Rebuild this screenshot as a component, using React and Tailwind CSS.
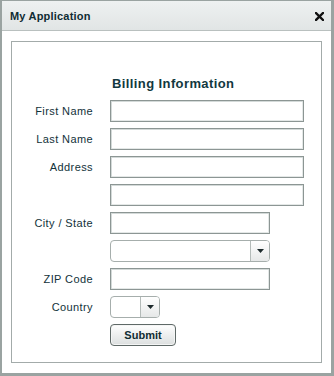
import React from "react";

function Field({ w }) {
  return (
    <div
      className={`h-[22px] border border-[#8c9694] bg-white shadow-[inset_1px_1px_0_#d4dad9,inset_-1px_-1px_0_#e4e8e7] ${w}`}
    />
  );
}

function Select({ w }) {
  return (
    <div className={`h-[22px] ${w} flex rounded-[4px] border border-[#a6aeac] bg-white overflow-hidden`}>
      <div className="flex-1" />
      <div className="w-[19px] border-l border-[#b4bbb9] bg-gradient-to-b from-[#ffffff] to-[#e6e8e8] flex items-center justify-center">
        <svg width="7" height="4" viewBox="0 0 7 4">
          <path d="M0 0H7L3.5 4Z" fill="#1d2a2c" />
        </svg>
      </div>
    </div>
  );
}

function Row({ label, children }) {
  return (
    <div className="flex items-center h-[22px]">
      <div className="w-[81px] text-right text-[11px] tracking-[0.4px] text-[#12323a]">{label}</div>
      <div className="ml-[17px]">{children}</div>
    </div>
  );
}

export default function App() {
  return (
    <div
      className="w-[334px] h-[376px] bg-white border-l-2 border-t border-r-[3px] border-b-[3px] border-[#9aa3a1] flex flex-col"
      style={{ fontFamily: '"Liberation Sans", Arial, sans-serif' }}
    >
      <div className="h-[30px] shrink-0 bg-gradient-to-b from-[#eef1f1] to-[#e1e5e5] border-b border-[#b9c0bf] flex items-center justify-between pl-[8px] pr-[7px] pt-[1px]">
        <span className="text-[11px] font-bold text-[#0f2c33] tracking-[0.2px]">My Application</span>
        <svg width="9" height="9" viewBox="0 0 9 9">
          <path d="M1 1L8 8M8 1L1 8" stroke="#111" strokeWidth="2.4" strokeLinecap="square" />
        </svg>
      </div>
      <div className="flex-1 pl-[9px] pt-[10px] pr-[9px] pb-[10px]">
        <div className="w-[311px] h-[322px] border border-[#a3abaa] flex flex-col">
          <div className="pt-[34px] pl-[100px] h-[58px] text-[13px] font-bold text-[#123840] tracking-[0.4px] leading-[16px]">
            Billing Information
          </div>
          <div className="flex flex-col gap-[6px]">
            <Row label="First Name"><Field w="w-[194px]" /></Row>
            <Row label="Last Name"><Field w="w-[194px]" /></Row>
            <Row label="Address"><Field w="w-[194px]" /></Row>
            <Row label=""><Field w="w-[194px]" /></Row>
            <Row label="City / State"><Field w="w-[160px]" /></Row>
            <Row label=""><Select w="w-[160px]" /></Row>
            <Row label="ZIP Code"><Field w="w-[160px]" /></Row>
            <Row label="Country"><Select w="w-[50px]" /></Row>
            <Row label="">
              <button className="w-[66px] h-[22px] rounded-[4px] border border-[#5f6967] bg-gradient-to-b from-[#ffffff] to-[#dcdfdf] shadow-[inset_0_0_0_1px_#f4f5f5] text-[11px] font-bold text-[#0f2c33] flex items-center justify-center">
                Submit
              </button>
            </Row>
          </div>
        </div>
      </div>
    </div>
  );
}
